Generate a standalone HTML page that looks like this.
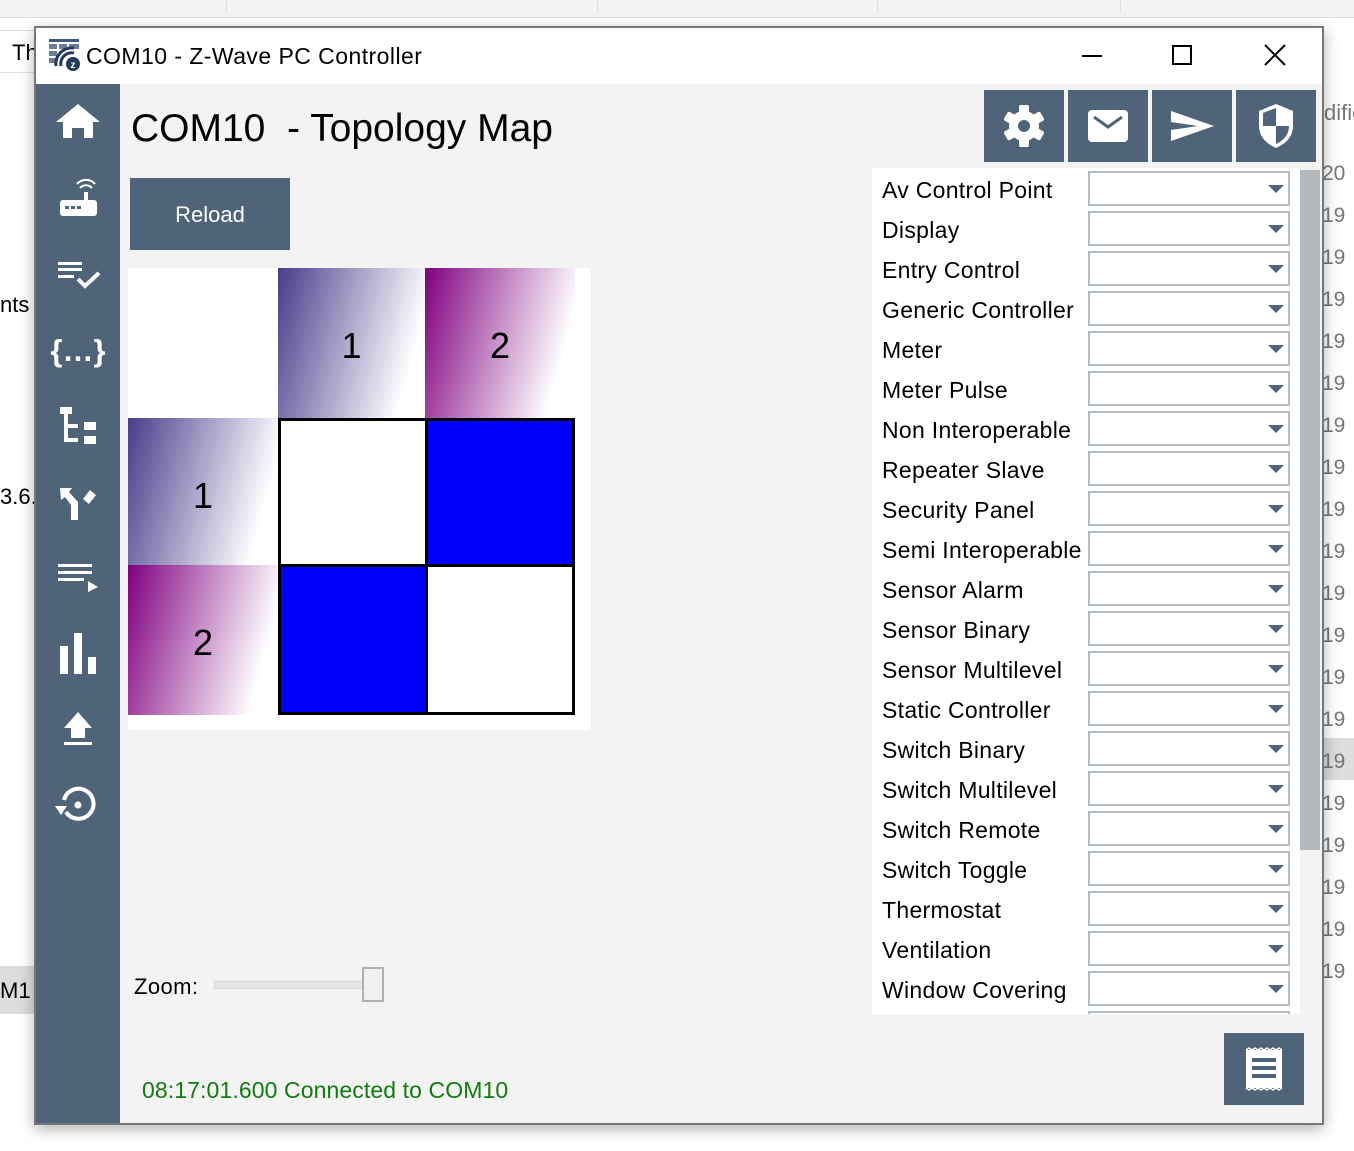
<!DOCTYPE html>
<html><head><meta charset="utf-8"><style>
*{margin:0;padding:0;box-sizing:border-box}
body{width:1354px;height:1151px;position:relative;overflow:hidden;background:#fff;font-family:"Liberation Sans",sans-serif;color:#000}
.abs{position:absolute}
.win{position:absolute;left:34px;top:26px;width:1290px;height:1099px;border:2px solid #777;background:#f3f3f3;box-shadow:0 4px 14px rgba(0,0,0,.3)}
.lbl{position:absolute;left:882px;font-size:23px;line-height:26px;letter-spacing:0.3px}
.cb{position:absolute;left:1088px;width:202px;height:35px;border:2px solid #b4bcc4;background:#fff}
.cb:after{content:"";position:absolute;right:4px;top:12px;border-left:8px solid transparent;border-right:8px solid transparent;border-top:8px solid #4f6478}
.btn{position:absolute;top:90px;width:80px;height:72px;background:#4f6478}
.bg19{position:absolute;left:1322px;font-size:21px;color:#777}
</style></head><body>
<div class="abs" style="left:0;top:0;width:1354px;height:18px;background:#f3f3f3;border-bottom:1px solid #ddd"></div>
<div class="abs" style="left:226px;top:0;width:1px;height:12px;background:#ddd"></div>
<div class="abs" style="left:597px;top:0;width:1px;height:12px;background:#ddd"></div>
<div class="abs" style="left:877px;top:0;width:1px;height:12px;background:#ddd"></div>
<div class="abs" style="left:1120px;top:0;width:1px;height:12px;background:#ddd"></div>
<div class="abs" style="left:0;top:30px;width:40px;height:1px;background:#ddd"></div>
<div class="abs" style="left:0;top:72px;width:40px;height:1px;background:#ddd"></div>
<div class="abs" style="left:12px;top:40px;font-size:22px">Th</div>
<div class="abs" style="left:0;top:292px;font-size:22px">nts</div>
<div class="abs" style="left:0;top:484px;font-size:22px">3.6.</div>
<div class="abs" style="left:0;top:966px;width:40px;height:48px;background:#ddd"></div>
<div class="abs" style="left:0;top:978px;font-size:22px">M1 (</div>
<div class="abs" style="left:1324px;top:100px;font-size:22px;color:#777">difie</div>
<div class="abs" style="left:1324px;top:738px;width:30px;height:42px;background:#ddd"></div>
<div class="bg19" style="top:162px">20</div>
<div class="bg19" style="top:204px">19</div><div class="bg19" style="top:246px">19</div><div class="bg19" style="top:288px">19</div><div class="bg19" style="top:330px">19</div><div class="bg19" style="top:372px">19</div><div class="bg19" style="top:414px">19</div><div class="bg19" style="top:456px">19</div><div class="bg19" style="top:498px">19</div><div class="bg19" style="top:540px">19</div><div class="bg19" style="top:582px">19</div><div class="bg19" style="top:624px">19</div><div class="bg19" style="top:666px">19</div><div class="bg19" style="top:708px">19</div><div class="bg19" style="top:750px">19</div><div class="bg19" style="top:792px">19</div><div class="bg19" style="top:834px">19</div><div class="bg19" style="top:876px">19</div><div class="bg19" style="top:918px">19</div><div class="bg19" style="top:960px">19</div>

<div class="win"></div>
<div class="abs" style="left:36px;top:28px;width:1286px;height:56px;background:#fff"></div>
<svg class="abs" style="left:48px;top:38px" width="34" height="34" viewBox="0 0 34 34">
<rect x="1" y="1" width="30" height="3" fill="#3d5a80"/>
<g fill="#6b7f99"><rect x="1" y="6" width="8" height="5"/><rect x="11" y="6" width="8" height="5"/><rect x="21" y="6" width="10" height="5"/><rect x="1" y="13" width="8" height="5"/><rect x="1" y="20" width="8" height="5"/></g>
<path d="M8 28 A16 16 0 0 1 26 10" stroke="#23395d" stroke-width="3" fill="none"/>
<path d="M13 28 A11 11 0 0 1 26 15" stroke="#23395d" stroke-width="3" fill="none"/>
<circle cx="25" cy="26" r="7" fill="#23395d"/><text x="25" y="30" font-size="10" font-weight="bold" fill="#fff" text-anchor="middle" font-family="Liberation Sans">z</text>
</svg>
<div class="abs" style="left:86px;top:43px;font-size:23px;letter-spacing:0.45px">COM10 - Z-Wave PC Controller</div>
<div class="abs" style="left:1082px;top:55px;width:20px;height:2px;background:#000"></div>
<div class="abs" style="left:1172px;top:45px;width:20px;height:20px;border:2px solid #000"></div>
<svg class="abs" style="left:1264px;top:44px" width="22" height="22"><path d="M1 1L21 21M21 1L1 21" stroke="#000" stroke-width="2"/></svg>

<div class="abs" style="left:36px;top:84px;width:84px;height:1039px;background:#4f6478"></div>
<svg class="abs" style="left:0;top:0" width="130" height="840" fill="#fff">
<polygon points="56,122 78,104 100,122 93,122 93,138 84,138 84,128 72,128 72,138 63,138 63,122"/>
<rect x="60" y="200" width="37" height="16" rx="3"/><rect x="84" y="192" width="4" height="9"/>
<g fill="#4f6478"><rect x="65" y="206" width="4" height="3"/><rect x="71" y="206" width="4" height="3"/><rect x="77" y="206" width="4" height="3"/></g>
<path d="M80 188 A8 8 0 0 1 92 188 M77 184 A12 12 0 0 1 95 184" stroke="#fff" stroke-width="2" fill="none"/>
<rect x="58" y="262" width="24" height="3"/><rect x="58" y="268" width="24" height="3"/><rect x="58" y="275" width="16" height="3"/>
<path d="M78 279 L85 286 L99 273" stroke="#fff" stroke-width="4" fill="none"/>
<text x="78" y="361" font-size="31" font-weight="bold" text-anchor="middle" font-family="Liberation Sans">{…}</text>
<rect x="60" y="407" width="12" height="7"/><rect x="64" y="414" width="4" height="28"/><rect x="64" y="424" width="14" height="4"/><rect x="64" y="438" width="14" height="4"/><rect x="84" y="422" width="12" height="8"/><rect x="84" y="436" width="12" height="8"/>
<polygon points="60,488 72,488 69,492 78,502 78,520 71,520 71,505 65,497 61,500"/>
<polygon points="83,499 90,490 96,495 89,504"/>
<rect x="58" y="564" width="34" height="3"/><rect x="58" y="571" width="34" height="3"/><rect x="58" y="578" width="26" height="3"/><polygon points="88,581 98,587 88,592"/>
<rect x="60" y="646" width="8" height="28"/><rect x="74" y="633" width="8" height="41"/><rect x="88" y="657" width="8" height="17"/>
<polygon points="78,712 92,728 85,728 85,738 71,738 71,728 64,728"/><rect x="64" y="742" width="28" height="3"/>
<path d="M66 812 A15 15 0 1 0 64 800" stroke="#fff" stroke-width="4" fill="none"/><polygon points="55,806 67,806 61,815"/><circle cx="78" cy="805" r="3.5"/>
</svg>

<div class="abs" style="left:131px;top:107px;font-size:39px">COM10&nbsp; - Topology Map</div>
<div class="abs" style="left:130px;top:178px;width:160px;height:72px;background:#4f6478;color:#fff;font-size:22px;text-align:center;line-height:74px">Reload</div>

<div class="abs" style="left:128px;top:268px;width:462px;height:462px;background:#fff"></div>
<div class="abs" style="left:278px;top:268px;width:147px;height:150px;background:linear-gradient(105deg,#483d8b 0%,#fff 85%);font-size:36px;text-align:center;line-height:156px">1</div>
<div class="abs" style="left:425px;top:268px;width:150px;height:150px;background:linear-gradient(105deg,#800080 0%,#fff 85%);font-size:36px;text-align:center;line-height:156px">2</div>
<div class="abs" style="left:128px;top:418px;width:150px;height:147px;background:linear-gradient(105deg,#483d8b 0%,#fff 85%);font-size:36px;text-align:center;line-height:156px">1</div>
<div class="abs" style="left:128px;top:565px;width:150px;height:150px;background:linear-gradient(105deg,#800080 0%,#fff 85%);font-size:36px;text-align:center;line-height:156px">2</div>
<div class="abs" style="left:278px;top:418px;width:297px;height:297px;border:3px solid #000;background:#fff"></div>
<div class="abs" style="left:425px;top:418px;width:3px;height:297px;background:#000"></div>
<div class="abs" style="left:278px;top:564px;width:297px;height:3px;background:#000"></div>
<div class="abs" style="left:428px;top:421px;width:144px;height:143px;background:#00f"></div>
<div class="abs" style="left:281px;top:567px;width:144px;height:145px;background:#00f"></div>

<div class="abs" style="left:134px;top:974px;font-size:22px;letter-spacing:0.4px">Zoom:</div>
<div class="abs" style="left:214px;top:981px;width:150px;height:8px;background:#e6e6e6;border:1px solid #d4d4d4"></div>
<div class="abs" style="left:362px;top:967px;width:22px;height:35px;background:#f0f0f0;border:2px solid #b0b0b0"></div>
<div class="abs" style="left:142px;top:1077px;font-size:23px;color:#107c10;letter-spacing:0.1px">08:17:01.600 Connected to COM10</div>

<div class="btn" style="left:984px"><svg width="80" height="72"><g transform="translate(40,36)" fill="#fff"><circle r="15"/><g><rect x="-5" y="-21" width="10" height="42" rx="2"/><rect x="-5" y="-21" width="10" height="42" rx="2" transform="rotate(60)"/><rect x="-5" y="-21" width="10" height="42" rx="2" transform="rotate(120)"/></g><circle r="6" fill="#4f6478"/></g></svg></div>
<div class="btn" style="left:1068px"><svg width="80" height="72"><rect x="20" y="20" width="40" height="32" rx="4" fill="#fff"/><path d="M26 27 L40 37 L54 27" stroke="#4f6478" stroke-width="3" fill="none"/></svg></div>
<div class="btn" style="left:1152px"><svg width="80" height="72"><polygon points="19,21 62,36 19,51 19,40 46,36 19,32" fill="#fff"/></svg></div>
<div class="btn" style="left:1236px"><svg width="80" height="72"><path d="M40 14 L57 21 L57 36 C57 47 49 54 40 58 C31 54 23 47 23 36 L23 21 Z" fill="#fff"/><path d="M40 18 L40 36 L27 36 L27 23 Z M40 36 L53 36 C53 45 47 51 40 54 Z" fill="#4f6478"/></svg></div>

<div class="abs" style="left:872px;top:168px;width:428px;height:846px;background:#fff"></div>
<div class="abs" style="left:1300px;top:170px;width:20px;height:680px;background:#b4b9be"></div>
<div class="lbl" style="top:177px">Av Control Point</div><div class="cb" style="top:171px"></div>
<div class="lbl" style="top:217px">Display</div><div class="cb" style="top:211px"></div>
<div class="lbl" style="top:257px">Entry Control</div><div class="cb" style="top:251px"></div>
<div class="lbl" style="top:297px">Generic Controller</div><div class="cb" style="top:291px"></div>
<div class="lbl" style="top:337px">Meter</div><div class="cb" style="top:331px"></div>
<div class="lbl" style="top:377px">Meter Pulse</div><div class="cb" style="top:371px"></div>
<div class="lbl" style="top:417px">Non Interoperable</div><div class="cb" style="top:411px"></div>
<div class="lbl" style="top:457px">Repeater Slave</div><div class="cb" style="top:451px"></div>
<div class="lbl" style="top:497px">Security Panel</div><div class="cb" style="top:491px"></div>
<div class="lbl" style="top:537px">Semi Interoperable</div><div class="cb" style="top:531px"></div>
<div class="lbl" style="top:577px">Sensor Alarm</div><div class="cb" style="top:571px"></div>
<div class="lbl" style="top:617px">Sensor Binary</div><div class="cb" style="top:611px"></div>
<div class="lbl" style="top:657px">Sensor Multilevel</div><div class="cb" style="top:651px"></div>
<div class="lbl" style="top:697px">Static Controller</div><div class="cb" style="top:691px"></div>
<div class="lbl" style="top:737px">Switch Binary</div><div class="cb" style="top:731px"></div>
<div class="lbl" style="top:777px">Switch Multilevel</div><div class="cb" style="top:771px"></div>
<div class="lbl" style="top:817px">Switch Remote</div><div class="cb" style="top:811px"></div>
<div class="lbl" style="top:857px">Switch Toggle</div><div class="cb" style="top:851px"></div>
<div class="lbl" style="top:897px">Thermostat</div><div class="cb" style="top:891px"></div>
<div class="lbl" style="top:937px">Ventilation</div><div class="cb" style="top:931px"></div>
<div class="lbl" style="top:977px">Window Covering</div><div class="cb" style="top:971px"></div>
<div class="abs" style="left:1088px;top:1011px;width:202px;height:3px;border:2px solid #b4bcc4;border-bottom:none"></div>

<div class="abs" style="left:1224px;top:1033px;width:80px;height:72px;background:#4f6478"><svg width="80" height="72"><rect x="22" y="17" width="36" height="38" fill="#fff"/><path d="M22 17 l3 -2 l3 2 l3 -2 l3 2 l3 -2 l3 2 l3 -2 l3 2 l3 -2 l3 2 l3 -2 l3 2 M22 55 l3 2 l3 -2 l3 2 l3 -2 l3 2 l3 -2 l3 2 l3 -2 l3 2 l3 -2 l3 2 l3 -2" stroke="#fff" stroke-width="1.5" fill="none"/><g fill="#4f6478"><rect x="28" y="25" width="24" height="4"/><rect x="28" y="33" width="24" height="4"/><rect x="28" y="41" width="24" height="4"/></g></svg></div>
</body></html>
